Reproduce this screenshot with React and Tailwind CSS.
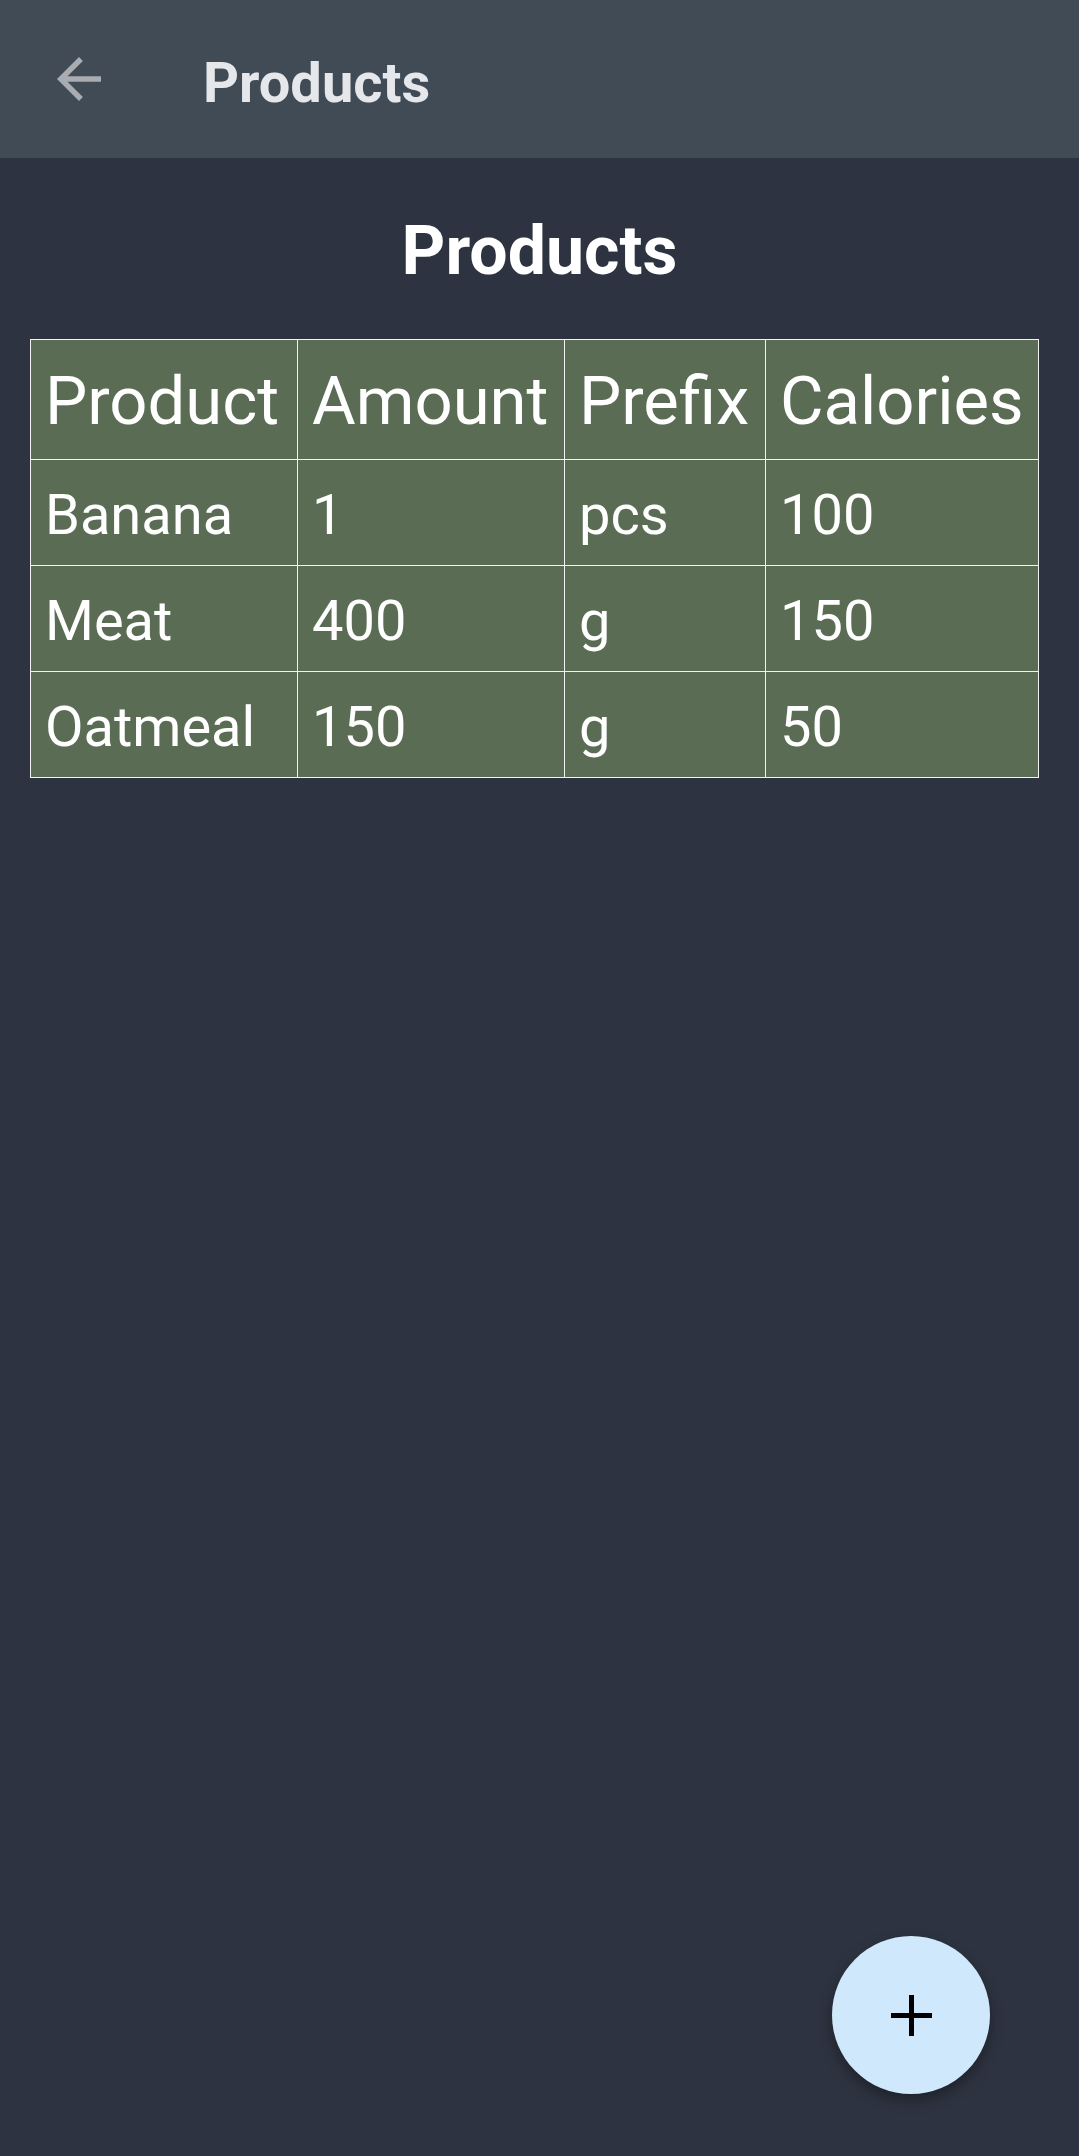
import React from "react";

const rows = [
  ["Banana", "1", "pcs", "100"],
  ["Meat", "400", "g", "150"],
  ["Oatmeal", "150", "g", "50"],
];

const widths = ["w-[267px]", "w-[267px]", "w-[201px]", "w-[273px]"];

export default function App() {
  return (
    <div
      className="relative w-[1079px] h-[2156px] bg-[#2d3340] overflow-hidden"
      style={{ fontFamily: "Roboto, 'Noto Sans', sans-serif" }}
    >
      <header className="h-[158px] bg-[#414b55] flex items-center pl-[46px]">
        <svg width="66" height="66" viewBox="0 0 24 24" className="shrink-0">
          <path
            d="M20 11H7.83l5.59-5.59L12 4l-8 8 8 8 1.41-1.41L7.83 13H20v-2z"
            fill="#a9acb0"
          />
        </svg>
        <span className="ml-[91px] pt-[8px] text-[56px] leading-none font-bold text-[#e5e7eb]">
          Products
        </span>
      </header>

      <h1 className="mt-[59px] h-[68px] text-center text-[68px] leading-none font-bold text-white">
        Products
      </h1>

      <table className="mt-[54px] ml-[30px] table-fixed border-separate border-spacing-0 border-t border-l border-[#f2f2f2] text-white">
        <thead>
          <tr>
            {["Product", "Amount", "Prefix", "Calories"].map((h, i) => (
              <th
                key={h}
                className={`${widths[i]} h-[120px] align-top pt-[28px] pl-[14px] pr-0 text-left font-normal text-[67px] leading-none whitespace-nowrap bg-[#5a6c53] border-r border-b border-[#f2f2f2]`}
              >
                {h}
              </th>
            ))}
          </tr>
        </thead>
        <tbody>
          {rows.map((r) => (
            <tr key={r[0]}>
              {r.map((c, i) => (
                <td
                  key={i}
                  className={`${widths[i]} h-[106px] align-top pt-[27px] pl-[14px] text-left text-[56px] leading-none whitespace-nowrap bg-[#5a6c53] border-r border-b border-[#f2f2f2]`}
                >
                  {c}
                </td>
              ))}
            </tr>
          ))}
        </tbody>
      </table>

      <button className="absolute right-[89px] bottom-[62px] w-[158px] h-[158px] rounded-full bg-[#cfe8fc] flex items-center justify-center shadow-[0_6px_14px_rgba(0,0,0,0.35)]">
        <svg width="41" height="41" viewBox="0 0 41 41">
          <rect x="18" y="0" width="5" height="41" fill="#000" />
          <rect x="0" y="18" width="41" height="5" fill="#000" />
        </svg>
      </button>
    </div>
  );
}
